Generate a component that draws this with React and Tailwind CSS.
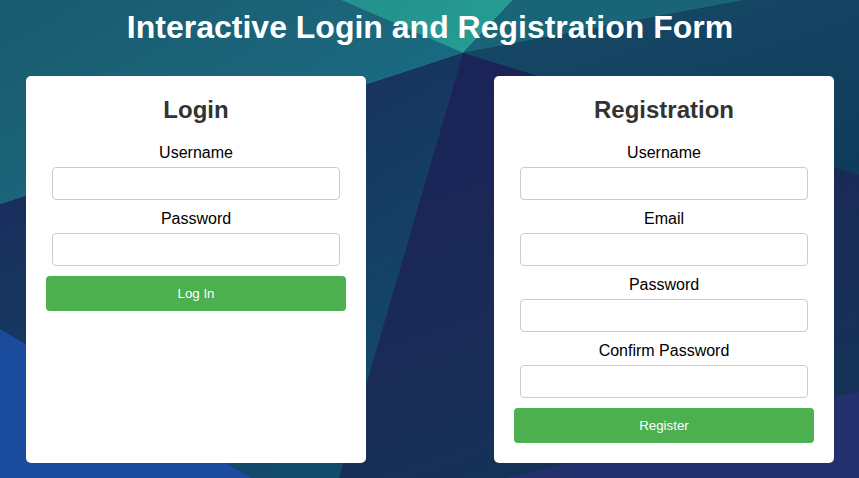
function Backdrop() {
  return (
    <svg className="absolute inset-0 h-full w-full" viewBox="0 0 859 478" preserveAspectRatio="none" aria-hidden="true">
      <defs>
        <linearGradient id="teal" gradientUnits="userSpaceOnUse" x1="30" y1="0" x2="200" y2="290">
          <stop offset="0" stopColor="#185b70" />
          <stop offset="0.5" stopColor="#1c647a" />
          <stop offset="1" stopColor="#176f87" />
        </linearGradient>
        <linearGradient id="mint" gradientUnits="userSpaceOnUse" x1="400" y1="0" x2="463" y2="53">
          <stop offset="0" stopColor="#25938d" />
          <stop offset="1" stopColor="#269b92" />
        </linearGradient>
        <linearGradient id="azure" gradientUnits="userSpaceOnUse" x1="640" y1="20" x2="700" y2="210">
          <stop offset="0" stopColor="#154663" />
          <stop offset="1" stopColor="#103c5c" />
        </linearGradient>
        <linearGradient id="navy" gradientUnits="userSpaceOnUse" x1="80" y1="150" x2="270" y2="478">
          <stop offset="0" stopColor="#1a2e5e" />
          <stop offset="0.45" stopColor="#153b60" />
          <stop offset="1" stopColor="#124b6b" />
        </linearGradient>
        <linearGradient id="indigo" gradientUnits="userSpaceOnUse" x1="440" y1="100" x2="570" y2="478">
          <stop offset="0" stopColor="#1b2458" />
          <stop offset="0.5" stopColor="#1a2a57" />
          <stop offset="1" stopColor="#143256" />
        </linearGradient>
      </defs>
      <rect width="859" height="478" fill="#1b2757" />
      <path d="M0 0H341L463 53L0 204.5Z" fill="url(#teal)" />
      <path d="M341 0H513L463 53Z" fill="url(#mint)" />
      <path d="M513 0H745L463 53Z" fill="#1a6478" />
      <path d="M745 0H859V175L463 53Z" fill="url(#azure)" />
      <path d="M463 53L859 175V391L506 478H339Z" fill="url(#indigo)" />
      <path d="M463 53L339 478H252L0 329V204.5Z" fill="url(#navy)" />
      <path d="M0 329L252 478H0Z" fill="#1a4b9c" />
      <path d="M859 391V478H506Z" fill="#24306e" />
    </svg>
  );
}

function Field({ label, type = "text" }) {
  return (
    <label className="flex w-[288px] flex-col items-center text-base leading-[18px] text-black">
      {label}
      <input type={type} className="mt-[5px] mb-2.5 h-[33px] w-full rounded border border-[#ccc] bg-white px-2 outline-none" />
    </label>
  );
}

function FormCard({ title, button, children }) {
  return (
    <form className="flex h-[387px] w-[340px] flex-col items-center rounded-[5px] bg-white p-5" onSubmit={(e) => e.preventDefault()}>
      <h2 className="mb-5 text-2xl leading-7 font-bold text-[#333]">{title}</h2>
      {children}
      <button className="h-[35px] w-full rounded bg-[#4caf50] text-[13.333px] leading-[15px] text-white">{button}</button>
    </form>
  );
}

export default function App() {
  return (
    <div className="relative isolate h-[478px] w-full overflow-hidden font-['Liberation_Sans',Arial,sans-serif]">
      <Backdrop />
      <main className="relative flex flex-col items-center pt-[9px] pl-px">
        <h1 className="text-center text-[32px] leading-[37px] font-bold text-white">Interactive Login and Registration Form</h1>
        <div className="mt-[30px] flex w-[808px] justify-between">
          <FormCard title="Login" button="Log In">
            <Field label="Username" />
            <Field label="Password" type="password" />
          </FormCard>
          <FormCard title="Registration" button="Register">
            <Field label="Username" />
            <Field label="Email" type="email" />
            <Field label="Password" type="password" />
            <Field label="Confirm Password" type="password" />
          </FormCard>
        </div>
      </main>
    </div>
  );
}
